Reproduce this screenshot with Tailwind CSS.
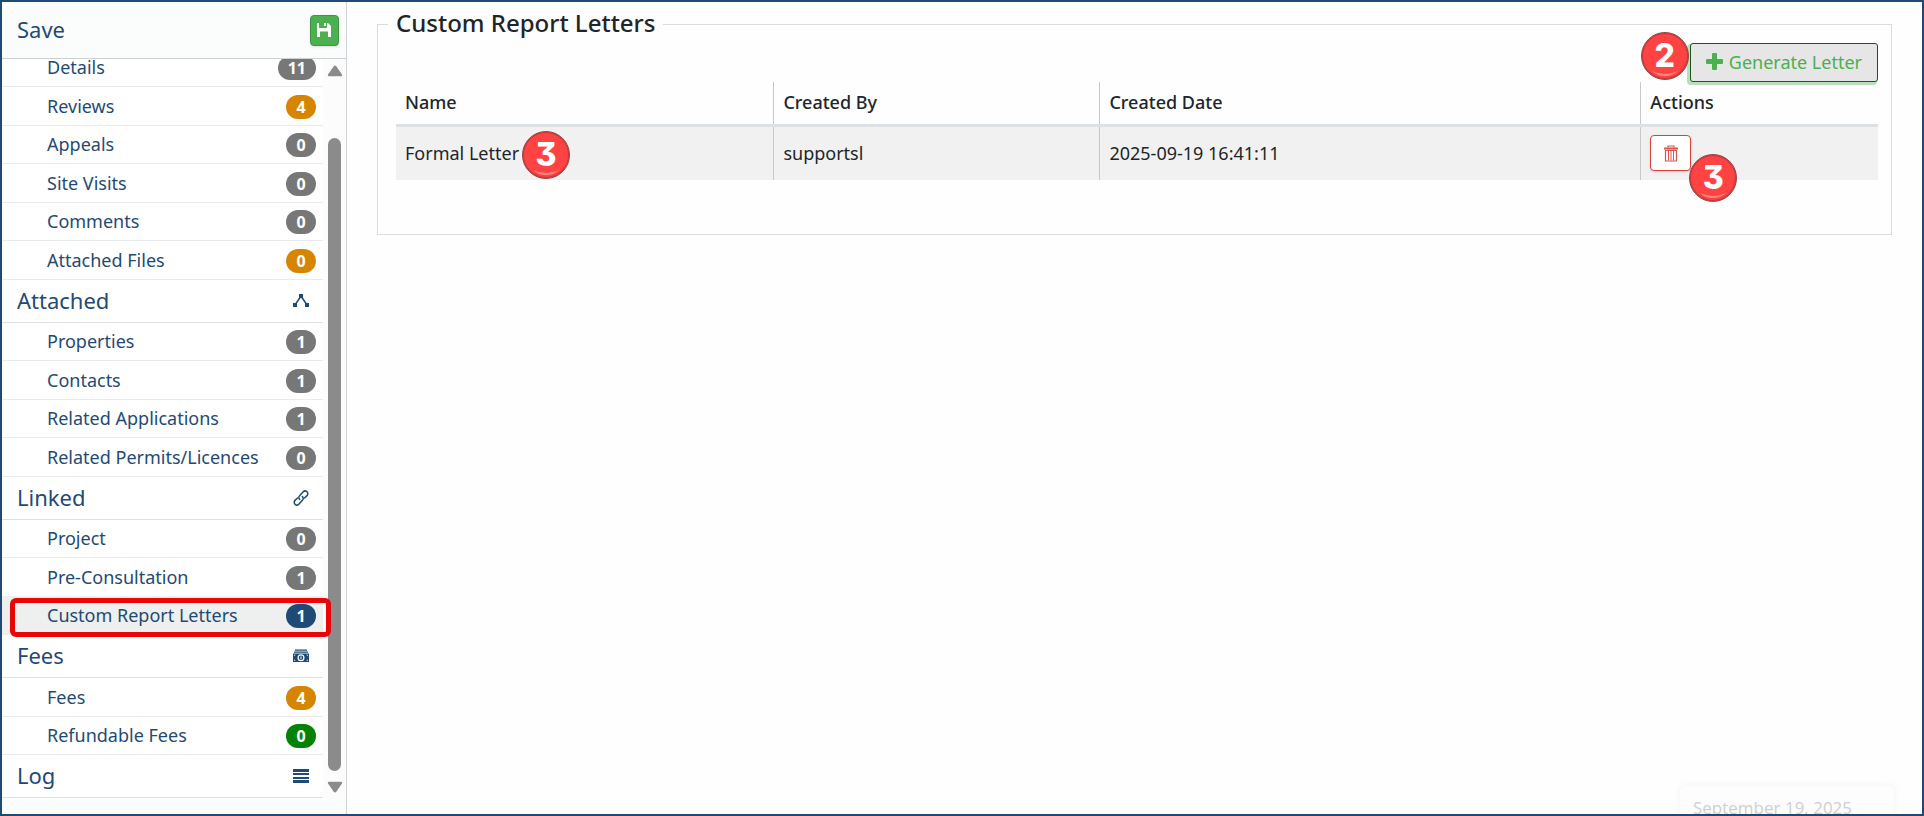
<!DOCTYPE html>
<html lang="en">
<head>
    <meta charset="UTF-8">
    <meta name="viewport" content="width=device-width, initial-scale=1.0">
    <title>Custom Report Letters</title>
    <script src="https://cdn.jsdelivr.net/npm/@tailwindcss/browser@4"></script>
</head>
<body class="h-screen overflow-hidden flex border-2 border-[#1f4a75] bg-[#fefefe] font-['Noto_Sans','Open_Sans',sans-serif] text-lg text-[#212529]">

    <!-- Sidebar -->
    <aside class="w-[345px] shrink-0 flex flex-col border-r border-[#d0d3d8] bg-[#fbfdfc] text-[#1f4a75]">
        <div class="h-[57px] shrink-0 flex items-center justify-between pl-[15px] pr-[7px] border-b border-[#cdd0d4]">
            <span class="pb-[2px] text-[22px]">Save</span>
            <button type="button" aria-label="Save" class="w-[29px] h-[31px] flex items-center justify-center pr-[2px] rounded bg-[#4caf50] border border-[#409444] shadow-sm">
                <svg class="w-4 h-4" viewBox="0 0 16 16" fill="#fff"><path fill-rule="evenodd" d="M1 1h2v5h8V1h1l3 3v11h-3V9.500H4V15H1zM8 1h2v3H8z"/></svg>
            </button>
        </div>

        <!-- Menu, scrolled to its end -->
        <div class="flex-1 min-h-0 flex items-end overflow-hidden">
            <nav class="flex-1 bg-white">
                <ul>
                    <li class="h-[38px] leading-9 even:h-[39px] even:leading-[38px] border-b border-[#e9ebec]"><a href="#" class="flex items-baseline justify-between pl-[45px] pr-[7px]">Details <span class="min-w-[30px] px-[10px] rounded-full bg-[#777] text-white text-base font-bold text-center">11</span></a></li>
                    <li class="h-[38px] leading-9 even:h-[39px] even:leading-[38px] border-b border-[#e9ebec]"><a href="#" class="flex items-baseline justify-between pl-[45px] pr-[7px]">Reviews <span class="min-w-[30px] px-[10px] rounded-full bg-[#d58500] text-white text-base font-bold text-center">4</span></a></li>
                    <li class="h-[38px] leading-9 even:h-[39px] even:leading-[38px] border-b border-[#e9ebec]"><a href="#" class="flex items-baseline justify-between pl-[45px] pr-[7px]">Appeals <span class="min-w-[30px] px-[10px] rounded-full bg-[#777] text-white text-base font-bold text-center">0</span></a></li>
                    <li class="h-[38px] leading-9 even:h-[39px] even:leading-[38px] border-b border-[#e9ebec]"><a href="#" class="flex items-baseline justify-between pl-[45px] pr-[7px]">Site Visits <span class="min-w-[30px] px-[10px] rounded-full bg-[#777] text-white text-base font-bold text-center">0</span></a></li>
                    <li class="h-[38px] leading-9 even:h-[39px] even:leading-[38px] border-b border-[#e9ebec]"><a href="#" class="flex items-baseline justify-between pl-[45px] pr-[7px]">Comments <span class="min-w-[30px] px-[10px] rounded-full bg-[#777] text-white text-base font-bold text-center">0</span></a></li>
                    <li class="h-[38px] leading-9 even:h-[39px] even:leading-[38px] border-b border-[#e9ebec]"><a href="#" class="flex items-baseline justify-between pl-[45px] pr-[7px]">Attached Files <span class="min-w-[30px] px-[10px] rounded-full bg-[#d58500] text-white text-base font-bold text-center">0</span></a></li>
                </ul>

                <h2 class="h-[43px] flex items-baseline justify-between pl-[15px] pr-[14px] border-b border-[#dde1e4] text-[22px] leading-10">
                    Attached
                    <svg class="w-4 h-4 -mb-[2px]" viewBox="0 0 16 16" fill="#1f4a75"><path d="M6 1h4v4H6zM0 10h4v4H0zM12 10h4v4h-4z"/><path d="M8 3L2 12M8 3l6 9" fill="none" stroke="#1f4a75" stroke-width="1.500"/></svg>
                </h2>
                <ul>
                    <li class="h-[38px] leading-9 even:h-[39px] even:leading-[38px] border-b border-[#e9ebec]"><a href="#" class="flex items-baseline justify-between pl-[45px] pr-[7px]">Properties <span class="min-w-[30px] px-[10px] rounded-full bg-[#777] text-white text-base font-bold text-center">1</span></a></li>
                    <li class="h-[38px] leading-9 even:h-[39px] even:leading-[38px] border-b border-[#e9ebec]"><a href="#" class="flex items-baseline justify-between pl-[45px] pr-[7px]">Contacts <span class="min-w-[30px] px-[10px] rounded-full bg-[#777] text-white text-base font-bold text-center">1</span></a></li>
                    <li class="h-[38px] leading-9 even:h-[39px] even:leading-[38px] border-b border-[#e9ebec]"><a href="#" class="flex items-baseline justify-between pl-[45px] pr-[7px]">Related Applications <span class="min-w-[30px] px-[10px] rounded-full bg-[#777] text-white text-base font-bold text-center">1</span></a></li>
                    <li class="h-[38px] leading-9 even:h-[39px] even:leading-[38px] border-b border-[#e9ebec]"><a href="#" class="flex items-baseline justify-between pl-[45px] pr-[7px]">Related Permits/Licences <span class="min-w-[30px] px-[10px] rounded-full bg-[#777] text-white text-base font-bold text-center">0</span></a></li>
                </ul>

                <h2 class="h-[43px] flex items-baseline justify-between pl-[15px] pr-[14px] border-b border-[#dde1e4] text-[22px] leading-10">
                    Linked
                    <svg class="w-4 h-4 -mb-[2px]" viewBox="0 0 16 16" fill="none" stroke="#1f4a75" stroke-width="1.500" stroke-linecap="round"><path d="M6.600 9.400a2.600 2.600 0 0 1 0-3.700l3.600-3.900a2.600 2.600 0 0 1 3.800 3.800L11.500 8"/><path d="M9.400 6.600a2.600 2.600 0 0 1 0 3.700l-3.600 3.900a2.600 2.600 0 0 1-3.800-3.800L4.500 8"/></svg>
                </h2>
                <ul>
                    <li class="h-[38px] leading-9 even:h-[39px] even:leading-[38px] border-b border-[#e9ebec]"><a href="#" class="flex items-baseline justify-between pl-[45px] pr-[7px]">Project <span class="min-w-[30px] px-[10px] rounded-full bg-[#777] text-white text-base font-bold text-center">0</span></a></li>
                    <li class="h-[38px] leading-9 even:h-[39px] even:leading-[38px] border-b border-[#eeefef]"><a href="#" class="flex items-baseline justify-between pl-[45px] pr-[7px]">Pre-Consultation <span class="min-w-[30px] px-[10px] rounded-full bg-[#777] text-white text-base font-bold text-center">1</span></a></li>
                    <li class="relative h-[38px] leading-9 even:h-[39px] even:leading-[38px] border-b border-[#e9ebec] bg-[#eeefef]">
                        <a href="#" aria-current="page" class="flex items-baseline justify-between pl-[45px] pr-[7px]">Custom Report Letters <span class="min-w-[30px] px-[10px] rounded-full bg-[#1f4a75] text-white text-base font-bold text-center">1</span></a>
                        <!-- Highlight frame -->
                        <div class="absolute z-10 left-2 -right-2 top-px -bottom-[3px] border-5 border-[#ea0606] rounded-md pointer-events-none"></div>
                    </li>
                </ul>

                <h2 class="h-[43px] flex items-baseline justify-between pl-[15px] pr-[14px] border-b border-[#dde1e4] text-[22px] leading-10">
                    Fees
                    <svg class="w-4 h-4 -mb-[2px]" viewBox="0 0 16 16" fill="#1f4a75"><path d="M2 1.500h12v1.200H2zM1 3.500h14v1.200H1z"/><path fill-rule="evenodd" d="M0 5.500h16V14H0zM8 6.300a3.500 3.500 0 1 0 0 7a3.500 3.500 0 0 0 0-7zM1.200 6.700v1.500l1.500-1.500zM14.800 6.700v1.500l-1.500-1.500zM1.200 12.800v-1.500l1.500 1.500zM14.800 12.800v-1.500l-1.500 1.500z"/><circle cx="8" cy="9.800" r="2.300"/><path d="M7.500 8.500h1v2.600h-1z" fill="#fff"/></svg>
                </h2>
                <ul>
                    <li class="h-[39px] leading-[38px] border-b border-[#e9ebec]"><a href="#" class="flex items-baseline justify-between pl-[45px] pr-[7px]">Fees <span class="min-w-[30px] px-[10px] rounded-full bg-[#d58500] text-white text-base font-bold text-center">4</span></a></li>
                    <li class="h-[38px] leading-9 border-b border-[#e9ebec]"><a href="#" class="flex items-baseline justify-between pl-[45px] pr-[7px]">Refundable Fees <span class="min-w-[30px] px-[10px] rounded-full bg-[#048204] text-white text-base font-bold text-center">0</span></a></li>
                </ul>

                <h2 class="h-[43px] flex items-baseline justify-between pl-[15px] pr-[14px] border-b border-[#dde1e4] text-[22px] leading-10">
                    Log
                    <svg class="w-4 h-4 -mb-[2px]" viewBox="0 0 16 16" fill="#1f4a75"><path d="M0 1h16v3H0zM0 5h16v2H0zM0 9h16v2H0zM0 12h16v3H0z"/></svg>
                </h2>
            </nav>

            <!-- Scrollbar -->
            <div class="w-[23px] h-full shrink-0 flex flex-col items-center pt-1 pb-[3px] bg-[#fcfcfc]">
                <svg class="w-4 h-4 shrink-0" viewBox="0 0 16 16" fill="#8b8b8b"><path d="M8 2.500q.8 0 1.300.8l5.700 8.200q.8 1.700-.8 1.700H1.800q-1.600 0-.8-1.700l5.700-8.200q.5-.8 1.300-.8z"/></svg>
                <div class="flex-1 mt-[59px] mb-2 w-[13px] rounded-full bg-[#8b8b8b]"></div>
                <svg class="w-4 h-4 shrink-0" viewBox="0 0 16 16" fill="#8b8b8b"><path d="M8 13.500q.8 0 1.300-.8l5.700-8.200q.8-1.700-.8-1.700H1.800q-1.600 0-.8 1.700l5.700 8.200q.5.8 1.300.8z"/></svg>
            </div>
        </div>
        <div class="h-4 shrink-0"></div>
    </aside>

    <!-- Main content -->
    <main class="relative flex-1 min-w-0 overflow-hidden px-[30px] pt-1">
        <fieldset class="border border-[#dcdcdc] pl-[18px] pr-[13px] pb-[54px]">
            <legend class="-ml-2 px-2 pb-[2px] text-2xl leading-[34px] font-medium">Custom Report Letters</legend>

            <div class="flex justify-end pt-px">
                <div class="relative">
                    <button type="button" class="h-[39px] flex items-center gap-[6px] px-[15px] pb-[2px] rounded-[3px] border border-[#1c5420] bg-[#e6e6e6] text-[#4caf50] shadow-[-2px_2px_0_1px_#b7dfb9]">
                        <svg class="w-[17px] h-[17px]" viewBox="0 0 17 17" fill="#4caf50"><rect x="6" y="0" width="5" height="17" rx="1"/><rect x="0" y="6" width="17" height="5" rx="1"/></svg>
                        Generate Letter
                    </button>
                    <div class="absolute right-full bottom-[2px] mr-px w-12 h-12 flex items-center justify-center rounded-full bg-[#ff4343] border border-[#8f4a4a] shadow-[inset_0_0_0_1px_#cf3537] text-white font-['Inter'] text-[32px] leading-none font-extrabold [font-feature-settings:'cv09']">
                        2
                        <svg class="absolute bottom-[1px] w-7 h-2" viewBox="0 0 28 8" fill="#ff8585"><path d="M1 1q13 6 26 0q-5 5-13 5T1 1z"/></svg>
                    </div>
                </div>
            </div>

            <table class="w-full table-fixed border-collapse text-left">
                <thead>
                    <tr class="h-[43px]">
                        <th class="w-[25.5%] px-[9px] pb-[2px] font-medium border-r border-[#c8c8c8]">Name</th>
                        <th class="w-[22%] px-[9px] pb-[2px] font-medium border-r border-[#c8c8c8]">Created By</th>
                        <th class="w-[36.5%] px-[9px] pb-[2px] font-medium border-r border-[#c8c8c8]">Created Date</th>
                        <th class="px-[9px] pb-[2px] font-medium">Actions</th>
                    </tr>
                </thead>
                <tbody>
                    <tr class="h-[55px] bg-[#f1f1f1] border-t-3 border-[#dee1e4]">
                        <td class="px-[9px] border-r border-r-[#c8c8c8]">
                            <span class="relative">Formal Letter
                                <span class="absolute left-full -top-[10px] ml-[3px] w-12 h-12 flex items-center justify-center rounded-full bg-[#ff4343] border border-[#8f4a4a] shadow-[inset_0_0_0_1px_#cf3537] text-white font-['Inter'] text-[32px] leading-none font-extrabold [font-feature-settings:'cv09']">
                                    3
                                    <svg class="absolute bottom-[1px] w-7 h-2" viewBox="0 0 28 8" fill="#ff8585"><path d="M1 1q13 6 26 0q-5 5-13 5T1 1z"/></svg>
                                </span>
                            </span>
                        </td>
                        <td class="px-[9px] border-r border-r-[#c8c8c8]">supportsl</td>
                        <td class="px-[9px] border-r border-r-[#c8c8c8]">2025-09-19 16:41:11</td>
                        <td class="px-[9px]">
                            <div class="relative w-[41px]">
                                <button type="button" aria-label="Delete" class="w-[41px] h-9 flex items-center justify-center rounded bg-white border border-[#d9413d] shadow-sm">
                                    <svg class="w-4 h-[17px]" viewBox="0 0 16 17" fill="none" stroke="#d9534f"><path d="M5 2.500V1h6v1.500" stroke-width="1.200"/><path d="M1 3.500h14" stroke-width="2"/><path d="M2.500 5.500h11v10.500h-11z" stroke-width="1.200"/><path d="M5.500 5.500v10M8 5.500v10M10.500 5.500v10"/></svg>
                                </button>
                                <div class="absolute left-[39px] top-[19px] w-12 h-12 flex items-center justify-center rounded-full bg-[#ff4343] border border-[#8f4a4a] shadow-[inset_0_0_0_1px_#cf3537] text-white font-['Inter'] text-[32px] leading-none font-extrabold [font-feature-settings:'cv09']">
                                    3
                                    <svg class="absolute bottom-[1px] w-7 h-2" viewBox="0 0 28 8" fill="#ff8585"><path d="M1 1q13 6 26 0q-5 5-13 5T1 1z"/></svg>
                                </div>
                            </div>
                        </td>
                    </tr>
                </tbody>
            </table>
        </fieldset>

        <!-- Date toast, sliding in from below -->
        <div class="absolute right-[27px] -bottom-4 w-[216px] h-[45px] px-[13px] pt-2 rounded-md border border-[#f9f9f9] bg-[#fdfdfd] text-[17px] leading-7 text-[#cfcfcf] shadow-[0_0_8px_#f7f7f7] font-['Open_Sans']">September 19, 2025</div>
    </main>

</body>
</html>
